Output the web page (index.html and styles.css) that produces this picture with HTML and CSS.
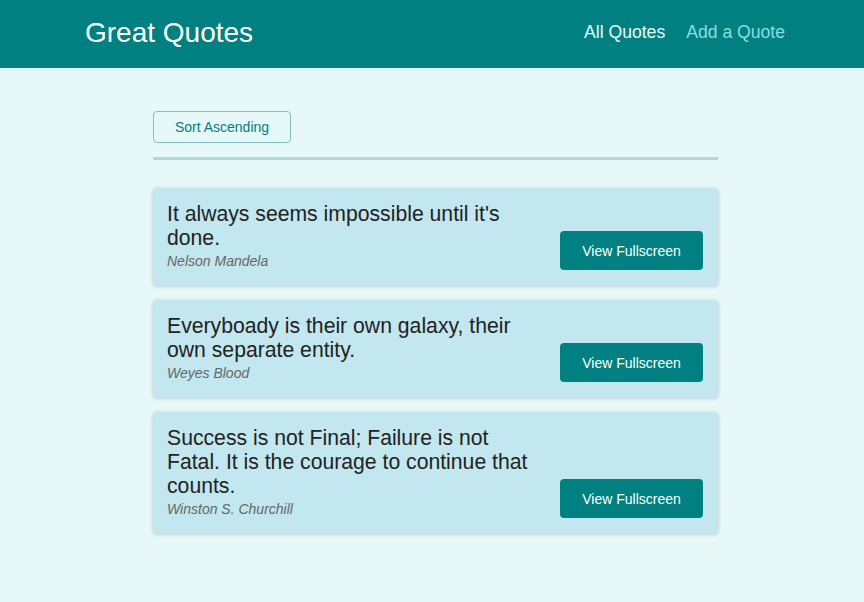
FILE: index.html
```html
<!DOCTYPE html>
<html lang="en">
<head>
<meta charset="utf-8">
<title>Great Quotes</title>
<link rel="stylesheet" href="styles.css">
</head>
<body>
<header class="header">
  <div class="logo">Great Quotes</div>
  <nav class="nav">
    <a class="nav-link active" href="#">All Quotes</a>
    <a class="nav-link" href="#">Add a Quote</a>
  </nav>
</header>
<main class="main">
  <div class="sorting">
    <button class="sort-btn">Sort Ascending</button>
  </div>
  <ul class="list">
    <li class="item">
      <figure class="quote">
        <blockquote class="text">It always seems impossible until it's done.</blockquote>
        <figcaption class="author">Nelson Mandela</figcaption>
      </figure>
      <a class="btn" href="#">View Fullscreen</a>
    </li>
    <li class="item">
      <figure class="quote">
        <blockquote class="text">Everyboady is their own galaxy, their own separate entity.</blockquote>
        <figcaption class="author">Weyes Blood</figcaption>
      </figure>
      <a class="btn" href="#">View Fullscreen</a>
    </li>
    <li class="item">
      <figure class="quote">
        <blockquote class="text">Success is not Final; Failure is not Fatal. It is the courage to continue that counts.</blockquote>
        <figcaption class="author">Winston S. Churchill</figcaption>
      </figure>
      <a class="btn" href="#">View Fullscreen</a>
    </li>
  </ul>
</main>
</body>
</html>
```
FILE: styles.css
```css
* { box-sizing: border-box; }
html, body {
  margin: 0;
  padding: 0;
  background: #e6f8f8;
  font-family: "Liberation Sans", Arial, sans-serif;
  height: 100%;
}
.header {
  height: 68px;
  background: #008080;
  display: flex;
  align-items: center;
  justify-content: space-between;
  padding: 0 79px 0 85px;
}
.logo {
  color: #fff;
  font-size: 28px;
  line-height: 1;
  margin-top: -2px;
}
.nav {
  display: flex;
  gap: 21px;
  margin-top: -4px;
}
.nav-link {
  font-size: 17.6px;
  color: #88dfdf;
  text-decoration: none;
}
.nav-link.active {
  color: #e6fcfc;
}
.main {
  width: 565px;
  margin-left: 153px;
  padding-top: 43px;
}
.sorting {
  padding-bottom: 14px;
  border-bottom: 3px solid #b4d6d6;
}
.sort-btn {
  font-family: inherit;
  font-size: 14px;
  color: #008080;
  background: transparent;
  border: 1px solid #7ec3c3;
  border-radius: 4px;
  height: 32px;
  width: 138px;
  padding: 0;
  cursor: pointer;
}
.list {
  list-style: none;
  margin: 28px 0 0;
  padding: 0;
  display: flex;
  flex-direction: column;
  gap: 15px;
}
.item {
  background: #c2e7ef;
  border-radius: 4px;
  box-shadow: 0 1px 4px rgba(0, 0, 0, 0.2);
  display: flex;
  align-items: flex-end;
  justify-content: space-between;
  padding: 14px 15px 15px 14px;
}
.quote {
  margin: 0;
  width: 368px;
}
.text {
  margin: 0;
  font-size: 21.2px;
  line-height: 24px;
  color: #222;
}
.author {
  margin-top: 3px;
  font-size: 14px;
  line-height: 17px;
  font-style: italic;
  color: #666;
}
.btn {
  display: flex;
  align-items: center;
  justify-content: center;
  width: 143px;
  height: 39px;
  background: #008080;
  color: #fff;
  border-radius: 4px;
  font-size: 14px;
  text-decoration: none;
}
```
